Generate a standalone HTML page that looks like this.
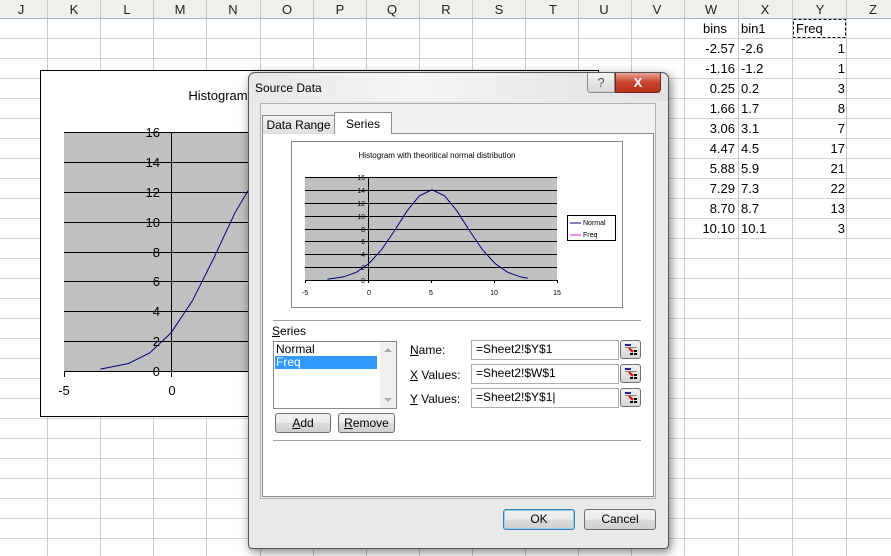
<!DOCTYPE html>
<html><head><meta charset="utf-8"><style>
*{margin:0;padding:0;box-sizing:border-box}
body{width:891px;height:556px;overflow:hidden;background:#fff;font-family:"Liberation Sans",sans-serif;position:relative}
.a{position:absolute}
.t{font-size:12px;color:#000;white-space:nowrap}
.btn{position:absolute;border:1px solid #707070;border-radius:3px;background:linear-gradient(#f2f2f2,#ebebeb 50%,#dcdcdc 50%,#cfcfcf);font-size:12px;text-align:center;line-height:18px}
.inp{position:absolute;background:#fff;border:1px solid #abadb3;font-size:12px;line-height:17px;padding-left:4px}
.ref{position:absolute;width:21px;height:19px;border:1px solid #707070;border-radius:3px;background:linear-gradient(#f2f2f2,#d6d6d6)}
.ref svg{position:absolute;left:3px;top:2px}
</style></head><body>
<svg class="a" style="left:0;top:0" width="891" height="556">
<rect x="0" y="0" width="891" height="18" fill="#f0efe9"/>
<g stroke="#d4d4d4" stroke-width="1">
<line x1="0" y1="38.5" x2="891" y2="38.5"/><line x1="0" y1="58.5" x2="891" y2="58.5"/><line x1="0" y1="78.5" x2="891" y2="78.5"/><line x1="0" y1="98.5" x2="891" y2="98.5"/><line x1="0" y1="118.5" x2="891" y2="118.5"/><line x1="0" y1="138.5" x2="891" y2="138.5"/><line x1="0" y1="158.5" x2="891" y2="158.5"/><line x1="0" y1="178.5" x2="891" y2="178.5"/><line x1="0" y1="198.5" x2="891" y2="198.5"/><line x1="0" y1="218.5" x2="891" y2="218.5"/><line x1="0" y1="238.5" x2="891" y2="238.5"/><line x1="0" y1="258.5" x2="891" y2="258.5"/><line x1="0" y1="278.5" x2="891" y2="278.5"/><line x1="0" y1="298.5" x2="891" y2="298.5"/><line x1="0" y1="318.5" x2="891" y2="318.5"/><line x1="0" y1="338.5" x2="891" y2="338.5"/><line x1="0" y1="358.5" x2="891" y2="358.5"/><line x1="0" y1="378.5" x2="891" y2="378.5"/><line x1="0" y1="398.5" x2="891" y2="398.5"/><line x1="0" y1="418.5" x2="891" y2="418.5"/><line x1="0" y1="438.5" x2="891" y2="438.5"/><line x1="0" y1="458.5" x2="891" y2="458.5"/><line x1="0" y1="478.5" x2="891" y2="478.5"/><line x1="0" y1="498.5" x2="891" y2="498.5"/><line x1="0" y1="518.5" x2="891" y2="518.5"/><line x1="0" y1="538.5" x2="891" y2="538.5"/>
</g>
<g stroke="#c8c8c8">
<line x1="47.5" y1="0" x2="47.5" y2="556"/><line x1="100.5" y1="0" x2="100.5" y2="556"/><line x1="153.5" y1="0" x2="153.5" y2="556"/><line x1="206.5" y1="0" x2="206.5" y2="556"/><line x1="260.5" y1="0" x2="260.5" y2="556"/><line x1="313.5" y1="0" x2="313.5" y2="556"/><line x1="366.5" y1="0" x2="366.5" y2="556"/><line x1="419.5" y1="0" x2="419.5" y2="556"/><line x1="472.5" y1="0" x2="472.5" y2="556"/><line x1="525.5" y1="0" x2="525.5" y2="556"/><line x1="578.5" y1="0" x2="578.5" y2="556"/><line x1="631.5" y1="0" x2="631.5" y2="556"/><line x1="684.5" y1="0" x2="684.5" y2="556"/><line x1="738.5" y1="0" x2="738.5" y2="556"/><line x1="792.5" y1="0" x2="792.5" y2="556"/><line x1="846.5" y1="0" x2="846.5" y2="556"/>
</g>
<line x1="0" y1="18.5" x2="891" y2="18.5" stroke="#9eb6ce"/>
<g font-family="Liberation Sans" font-size="13" text-anchor="middle" fill="#222">
<text x="21" y="14">J</text><text x="74" y="14">K</text><text x="127" y="14">L</text><text x="180" y="14">M</text><text x="233" y="14">N</text><text x="287" y="14">O</text><text x="340" y="14">P</text><text x="392" y="14">Q</text><text x="446" y="14">R</text><text x="499" y="14">S</text><text x="553" y="14">T</text><text x="604" y="14">U</text><text x="657" y="14">V</text><text x="711" y="14">W</text><text x="765" y="14">X</text><text x="820" y="14">Y</text><text x="873" y="14">Z</text>
</g>
<rect x="793.5" y="19.5" width="52" height="18" fill="none" stroke="#000" stroke-dasharray="3,2"/>
<g font-family="Liberation Sans" font-size="13" fill="#000">
<text x="703" y="33">bins</text><text x="741" y="33">bin1</text><text x="796" y="33">Freq</text>
<g text-anchor="end"><text x="735" y="53">-2.57</text><text x="735" y="73">-1.16</text><text x="735" y="93">0.25</text><text x="735" y="113">1.66</text><text x="735" y="133">3.06</text><text x="735" y="153">4.47</text><text x="735" y="173">5.88</text><text x="735" y="193">7.29</text><text x="735" y="213">8.70</text><text x="735" y="233">10.10</text>
<text x="845" y="53">1</text><text x="845" y="73">1</text><text x="845" y="93">3</text><text x="845" y="113">8</text><text x="845" y="133">7</text><text x="845" y="153">17</text><text x="845" y="173">21</text><text x="845" y="193">22</text><text x="845" y="213">13</text><text x="845" y="233">3</text></g>
<text x="741" y="53">-2.6</text><text x="741" y="73">-1.2</text><text x="741" y="93">0.2</text><text x="741" y="113">1.7</text><text x="741" y="133">3.1</text><text x="741" y="153">4.5</text><text x="741" y="173">5.9</text><text x="741" y="193">7.3</text><text x="741" y="213">8.7</text><text x="741" y="233">10.1</text>
</g>
<rect x="40.5" y="70.5" width="558" height="346" fill="#fff" stroke="#000"/>
<rect x="64" y="132" width="534" height="239" fill="#c0c0c0"/>
<g stroke="#000"><line x1="64" y1="132.5" x2="598" y2="132.5"/><line x1="64" y1="162.5" x2="598" y2="162.5"/><line x1="64" y1="192.5" x2="598" y2="192.5"/><line x1="64" y1="222.5" x2="598" y2="222.5"/><line x1="64" y1="252.5" x2="598" y2="252.5"/><line x1="64" y1="281.5" x2="598" y2="281.5"/><line x1="64" y1="311.5" x2="598" y2="311.5"/><line x1="64" y1="341.5" x2="598" y2="341.5"/><line x1="64" y1="371.5" x2="598" y2="371.5"/><line x1="171.5" y1="132" x2="171.5" y2="377"/><line x1="64.5" y1="371" x2="64.5" y2="377"/></g>
<polyline fill="none" stroke="#000080" points="100.4,369.1 128.2,363.6 149.6,353 171,332.9 192.4,300.8 213.8,258.1 235.2,212.3 256.6,176.4"/>
<g font-family="Liberation Sans" font-size="13" fill="#000" text-anchor="end"><text x="160" y="137">16</text><text x="160" y="167">14</text><text x="160" y="197">12</text><text x="160" y="227">10</text><text x="160" y="257">8</text><text x="160" y="286">6</text><text x="160" y="316">4</text><text x="160" y="346">2</text><text x="160" y="376">0</text></g>
<g font-family="Liberation Sans" font-size="13" text-anchor="middle"><text x="64" y="395">-5</text><text x="172" y="395">0</text><text x="218" y="100" text-anchor="middle">Histogram</text></g>
</svg>

<div class="a" style="left:248px;top:72px;width:421px;height:477px;border:1px solid #555;border-radius:7px 7px 4px 4px;background:#c9d9ec;box-shadow:2px 3px 10px rgba(0,0,0,.5)"></div>
<div class="a" style="left:249px;top:73px;width:419px;height:30px;border-radius:7px 7px 0 0;background:linear-gradient(90deg,#e8e8e8,#f4f4f4 40%,#e2e2e2)"></div>
<div class="a" style="left:249px;top:101px;width:419px;height:447px;background:#eaeaea;border-radius:0 0 4px 4px"></div>
<div class="a t" style="left:255px;top:81px;font-size:12px">Source Data</div>
<div class="a" style="left:587px;top:73px;width:28px;height:20px;border:1px solid #888;border-top:none;border-radius:0 0 0 4px;background:linear-gradient(#f4f4f4,#d8d8d8);text-align:center;font-size:13px;color:#555;line-height:20px">?</div>
<div class="a" style="left:615px;top:73px;width:46px;height:20px;border:1px solid #6b2a22;border-top:none;border-radius:0 0 4px 0;background:linear-gradient(#e8a493,#c7432d 50%,#b8301c);text-align:center;color:#fff;font-weight:bold;font-size:13px;line-height:19px">X</div>
<div class="a" style="left:260px;top:103px;width:396px;height:396px;border:1px solid #b0b0b0;background:#f0f0f0"></div>
<div class="a" style="left:262px;top:133px;width:392px;height:364px;border:1px solid #898c95;background:#fff"></div>
<div class="a t" style="left:262px;top:115px;width:73px;height:19px;border:1px solid #898c95;border-bottom:none;background:linear-gradient(#f2f2f2,#e0e0e0);text-align:center;line-height:19px">Data Range</div>
<div class="a t" style="left:334px;top:112px;width:58px;height:22px;border:1px solid #898c95;border-bottom:none;background:#fff;text-align:center;line-height:22px">Series</div>
<svg class="a" style="left:291px;top:141px" width="332" height="167">
<rect x="0.5" y="0.5" width="331" height="166" fill="#fff" stroke="#888"/>
<text x="146" y="17" font-family="Liberation Sans" font-size="8" text-anchor="middle">Histogram with theoritical normal distribution</text>
<rect x="14" y="36" width="252" height="103" fill="#c0c0c0"/>
<g stroke="#000" stroke-width="1"><line x1="14" y1="36.5" x2="266" y2="36.5"/><line x1="14" y1="49.5" x2="266" y2="49.5"/><line x1="14" y1="62.5" x2="266" y2="62.5"/><line x1="14" y1="75.5" x2="266" y2="75.5"/><line x1="14" y1="88.5" x2="266" y2="88.5"/><line x1="14" y1="100.5" x2="266" y2="100.5"/><line x1="14" y1="113.5" x2="266" y2="113.5"/><line x1="14" y1="126.5" x2="266" y2="126.5"/><line x1="14" y1="139.5" x2="266" y2="139.5"/><line x1="77.5" y1="36" x2="77.5" y2="142"/>
<line x1="14.5" y1="139" x2="14.5" y2="142"/><line x1="140.5" y1="139" x2="140.5" y2="142"/><line x1="203.5" y1="139" x2="203.5" y2="142"/><line x1="266.5" y1="139" x2="266.5" y2="142"/></g>
<polyline fill="none" stroke="#000080" points="36.4,138.2 52.8,135.8 65.4,131.2 78,122.5 90.6,108.6 103.2,90.1 115.8,70.3 128.4,54.8 141,48.8 153.6,54.8 166.2,70.3 178.8,90.1 191.4,108.6 204,122.5 216.6,131.2 229.2,135.8 236.8,137.3"/>
<g font-family="Liberation Sans" font-size="7" text-anchor="end"><text x="74" y="39">16</text><text x="74" y="52">14</text><text x="74" y="65">12</text><text x="74" y="78">10</text><text x="74" y="91">8</text><text x="74" y="103">6</text><text x="74" y="116">4</text><text x="74" y="129">2</text><text x="74" y="142">0</text></g>
<g font-family="Liberation Sans" font-size="7" text-anchor="middle"><text x="14" y="154">-5</text><text x="78" y="154">0</text><text x="140" y="154">5</text><text x="203" y="154">10</text><text x="266" y="154">15</text></g>
<rect x="276.5" y="74.5" width="48" height="25" fill="#fff" stroke="#000"/>
<line x1="279" y1="82" x2="290" y2="82" stroke="#000080"/><line x1="279" y1="94" x2="290" y2="94" stroke="#e020e0"/>
<g font-family="Liberation Sans" font-size="7"><text x="292" y="84">Normal</text><text x="292" y="96">Freq</text></g>
</svg>
<div class="a" style="left:273px;top:320px;width:368px;height:1px;background:#a0a0a0"></div>
<div class="a t" style="left:272px;top:324px"><u>S</u>eries</div>
<div class="a" style="left:273px;top:341px;width:124px;height:68px;border:1px solid #828790;background:#fff"></div>
<div class="a" style="left:380px;top:342px;width:16px;height:66px;background:#f0f0f0"></div>
<div class="a" style="left:384px;top:348px;width:0;height:0;border-left:4px solid transparent;border-right:4px solid transparent;border-bottom:4px solid #aaa"></div>
<div class="a" style="left:384px;top:398px;width:0;height:0;border-left:4px solid transparent;border-right:4px solid transparent;border-top:4px solid #aaa"></div>
<div class="a t" style="left:276px;top:342px">Normal</div>
<div class="a t" style="left:275px;top:356px;width:102px;height:13px;background:#3399ff;color:#fff;line-height:13px;padding-left:1px">Freq</div>
<div class="btn" style="left:275px;top:413px;width:56px;height:20px"><u>A</u>dd</div>
<div class="btn" style="left:338px;top:413px;width:57px;height:20px"><u>R</u>emove</div>
<div class="a t" style="left:410px;top:343px"><u>N</u>ame:</div>
<div class="a t" style="left:410px;top:368px"><u>X</u> Values:</div>
<div class="a t" style="left:410px;top:392px"><u>Y</u> Values:</div>
<div class="inp" style="left:471px;top:340px;width:148px;height:20px">=Sheet2!$Y$1</div>
<div class="inp" style="left:471px;top:364px;width:148px;height:20px">=Sheet2!$W$1</div>
<div class="inp" style="left:471px;top:388px;width:148px;height:20px">=Sheet2!$Y$1|</div>
<div class="ref" style="left:620px;top:340px"><svg width="14" height="13"><rect x="1" y="1" width="6" height="2" fill="#1a2a9a"/><rect x="1" y="4" width="12" height="1" fill="#888"/><path d="M5 5 L9 9" stroke="#e00000" stroke-width="2"/><rect x="6" y="10" width="3" height="2" fill="#000"/><rect x="10" y="10" width="3" height="2" fill="#000"/><rect x="10" y="7" width="3" height="2" fill="#000"/></svg></div>
<div class="ref" style="left:620px;top:364px"><svg width="14" height="13"><rect x="1" y="1" width="6" height="2" fill="#1a2a9a"/><rect x="1" y="4" width="12" height="1" fill="#888"/><path d="M5 5 L9 9" stroke="#e00000" stroke-width="2"/><rect x="6" y="10" width="3" height="2" fill="#000"/><rect x="10" y="10" width="3" height="2" fill="#000"/><rect x="10" y="7" width="3" height="2" fill="#000"/></svg></div>
<div class="ref" style="left:620px;top:388px"><svg width="14" height="13"><rect x="1" y="1" width="6" height="2" fill="#1a2a9a"/><rect x="1" y="4" width="12" height="1" fill="#888"/><path d="M5 5 L9 9" stroke="#e00000" stroke-width="2"/><rect x="6" y="10" width="3" height="2" fill="#000"/><rect x="10" y="10" width="3" height="2" fill="#000"/><rect x="10" y="7" width="3" height="2" fill="#000"/></svg></div>
<div class="a" style="left:273px;top:440px;width:368px;height:1px;background:#a0a0a0"></div>
<div class="btn" style="left:503px;top:509px;width:72px;height:21px;border-color:#3c7fb1;box-shadow:inset 0 0 0 1px #8fd0f0">OK</div>
<div class="btn" style="left:584px;top:509px;width:72px;height:21px">Cancel</div>
</body></html>
